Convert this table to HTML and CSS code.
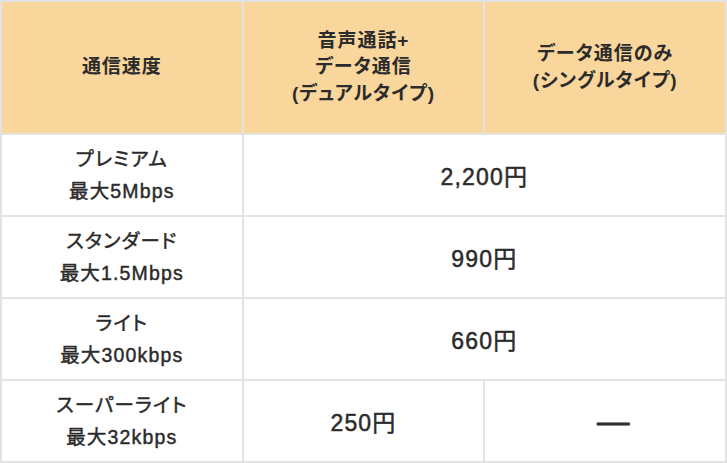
FILE: index.html
```html
<!DOCTYPE html>
<html lang="ja">
<head>
<meta charset="utf-8">
<title>料金表</title>
<link rel="stylesheet" href="styles.css">
</head>
<body>
<table class="plan-table">
  <colgroup>
    <col class="col">
    <col class="col">
    <col class="col">
  </colgroup>
  <thead>
    <tr class="head-row">
      <th>通信速度</th>
      <th>音声通話+<br>データ通信<br>(デュアルタイプ)</th>
      <th>データ通信のみ<br>(シングルタイプ)</th>
    </tr>
  </thead>
  <tbody>
    <tr class="body-row">
      <th class="speed">プレミアム<br>最大5Mbps</th>
      <td class="price" colspan="2">2,200円</td>
    </tr>
    <tr class="body-row">
      <th class="speed">スタンダード<br>最大1.5Mbps</th>
      <td class="price" colspan="2">990円</td>
    </tr>
    <tr class="body-row">
      <th class="speed">ライト<br>最大300kbps</th>
      <td class="price" colspan="2">660円</td>
    </tr>
    <tr class="body-row">
      <th class="speed">スーパーライト<br>最大32kbps</th>
      <td class="price">250円</td>
      <td class="price dash">—</td>
    </tr>
  </tbody>
</table>
</body>
</html>
```
FILE: styles.css
```css
html, body {
  margin: 0;
  padding: 0;
  background: #ffffff;
}

body {
  font-family: "Liberation Sans", "Noto Sans CJK JP", sans-serif;
  color: #2b2b2b;
  font-feature-settings: "palt";
}

.plan-table {
  width: 727px;
  border-collapse: collapse;
  table-layout: fixed;
  border: 2px solid #e3e3e3;
}

.col {
  width: 33.333%;
}

.plan-table th,
.plan-table td {
  border: 2px solid #e3e3e3;
  text-align: center;
  vertical-align: middle;
  padding: 0;
}

.head-row {
  height: 133px;
}

.head-row th {
  background: #f9d69b;
  font-size: 19px;
  font-weight: bold;
  line-height: 26.5px;
  letter-spacing: 0.05em;
}

.body-row {
  height: 82px;
}

.speed {
  font-size: 19.5px;
  font-weight: normal;
  line-height: 32px;
  letter-spacing: 0.06em;
  -webkit-text-stroke: 0.45px #2b2b2b;
}

.price {
  font-size: 23px;
  font-weight: normal;
  letter-spacing: 0.05em;
  -webkit-text-stroke: 0.5px #2b2b2b;
}

.plan-table .dash {
  font-size: 32px;
  letter-spacing: 0;
  padding-left: 16px;
  -webkit-text-stroke: 1px #2b2b2b;
}
```
